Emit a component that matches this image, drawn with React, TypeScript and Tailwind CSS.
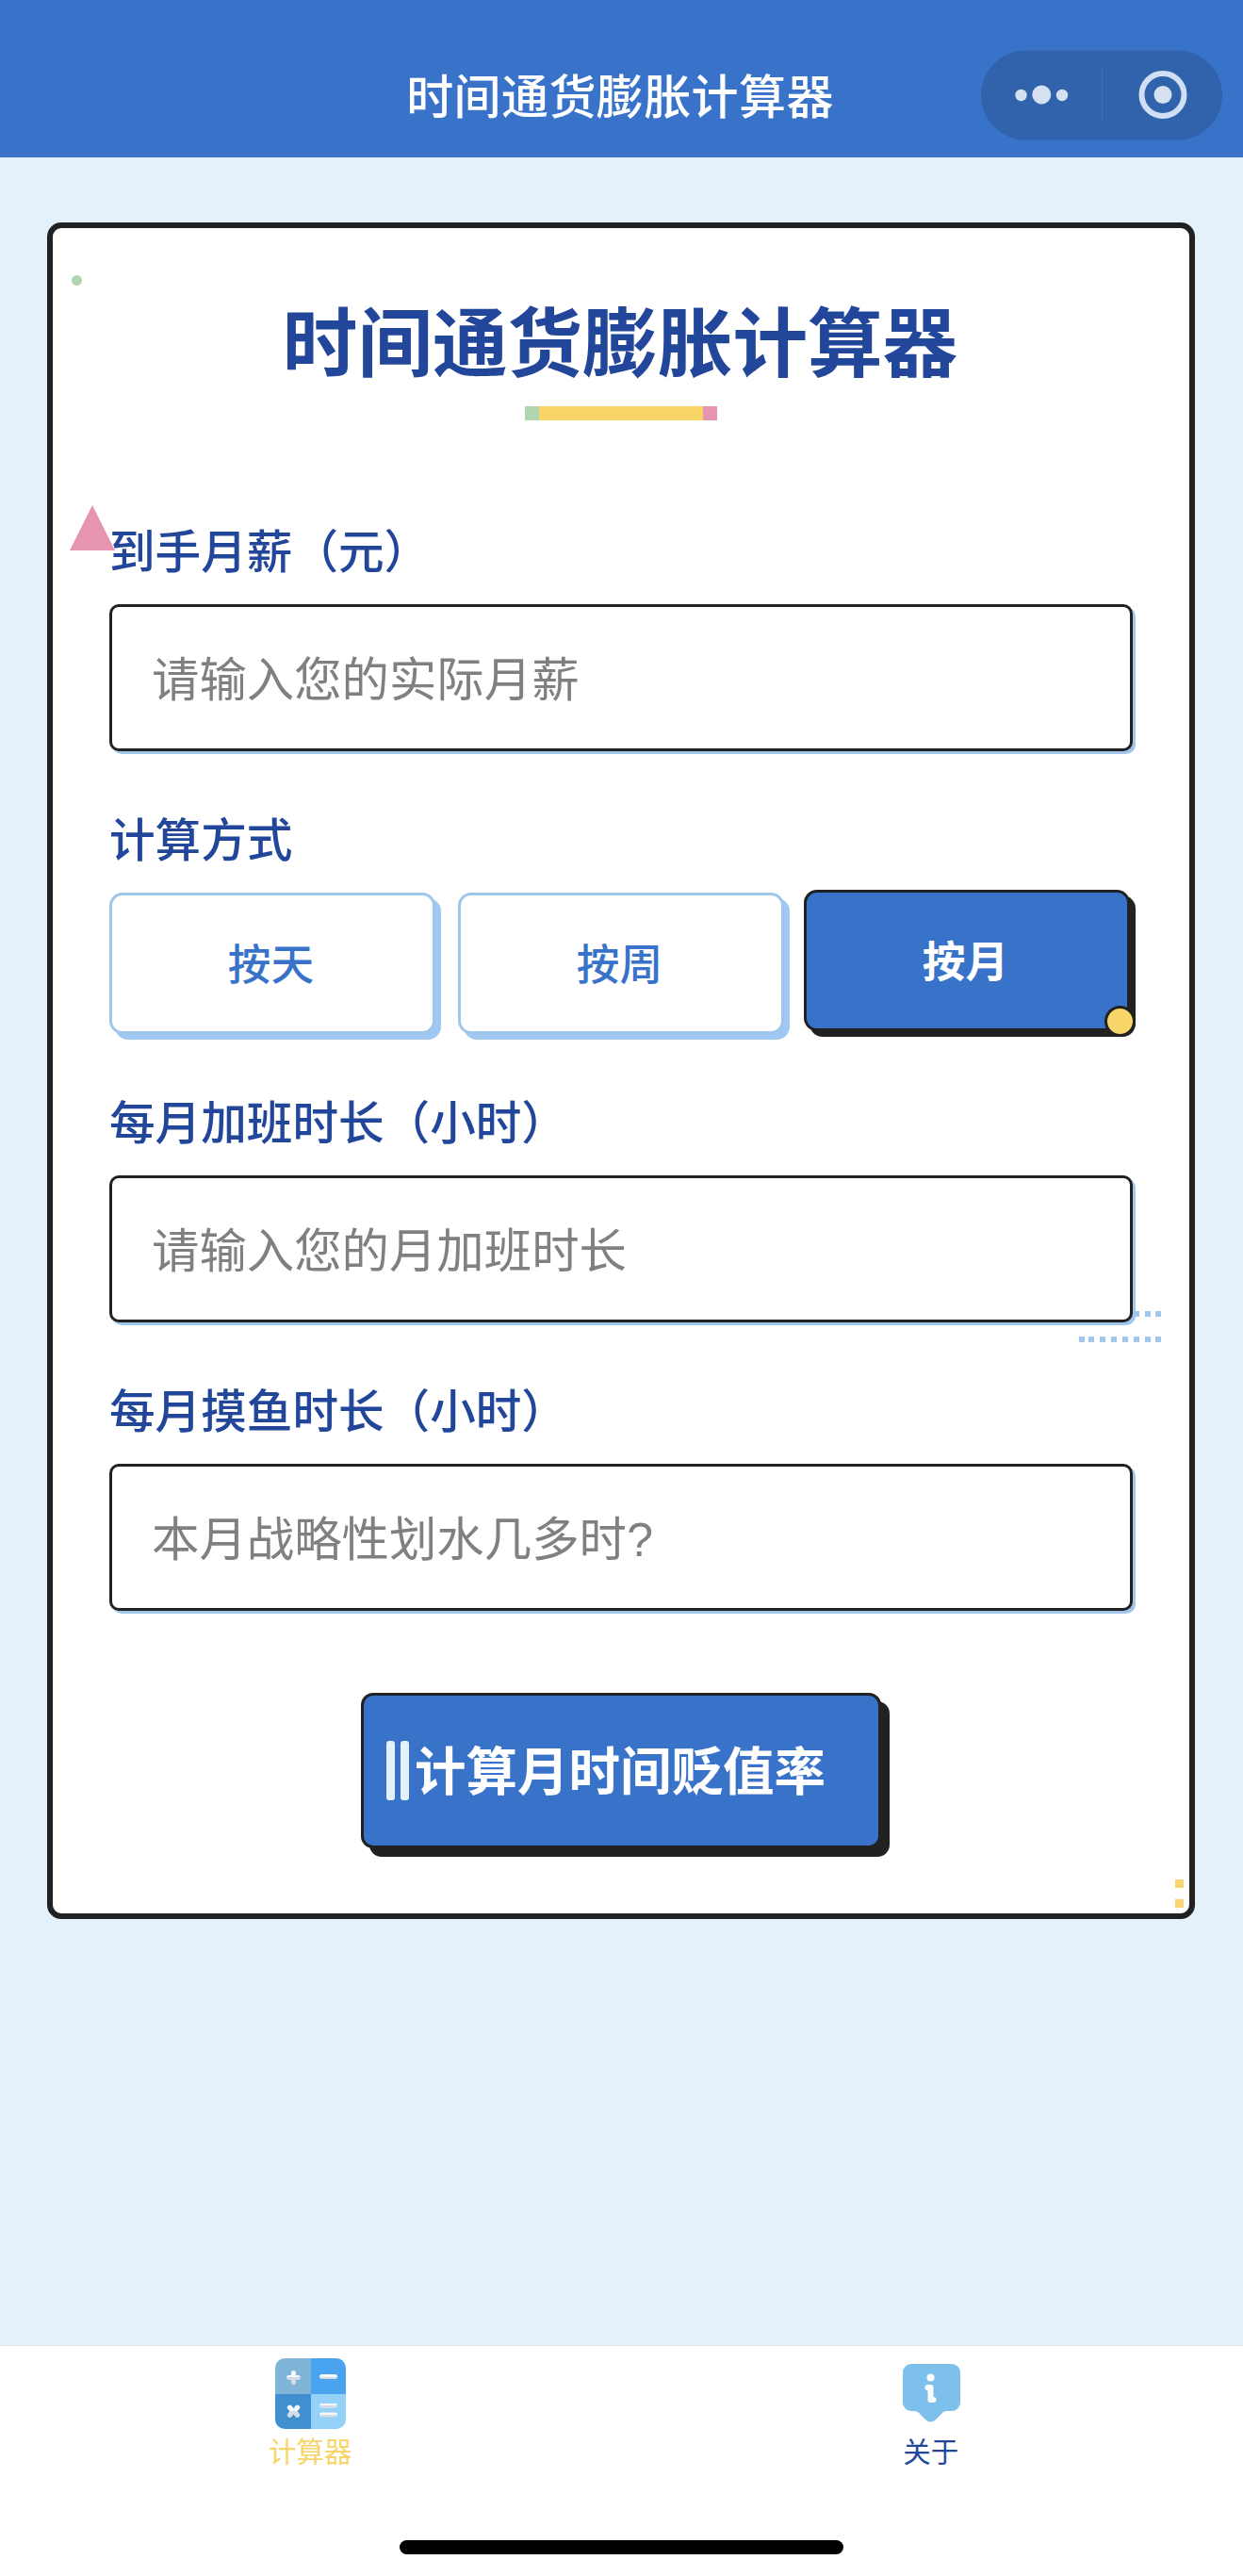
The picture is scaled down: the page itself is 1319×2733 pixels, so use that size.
import { useState } from "react";

type Mode = {
  key: string;
  label: string;
};

const modes: Mode[] = [
  { key: "day", label: "按天" },
  { key: "week", label: "按周" },
  { key: "month", label: "按月" },
];

// x offsets of the squares in the dotted decoration
const dotColumns = [0, 10, 22, 34, 46, 58, 70, 81];

function NavBar() {
  return (
    <header className="relative flex h-[167px] items-end justify-center bg-[#3873c9] pb-[33px]">
      <h1 className="pr-[3px] text-[50px] leading-[70px] font-medium tracking-[0.4px] text-white">
        时间通货膨胀计算器
      </h1>

      {/* Mini program capsule */}
      <svg className="absolute top-[53px] left-[1041px] h-[96px] w-[257px]" viewBox="0 0 257 96">
        <rect x="0" y="0.5" width="256" height="95" rx="47.5" fill="#3063ac" />
        <g fill="#d5e0f0">
          <circle cx="42.5" cy="48" r="6.2" />
          <circle cx="64.3" cy="47.5" r="10" />
          <circle cx="86" cy="48" r="6.2" />
          <circle cx="193" cy="47.5" r="9.5" />
        </g>
        <path d="M128.5 18v60" stroke="#3f6fb4" strokeWidth="1" />
        <circle cx="193" cy="47.5" r="22.5" fill="none" stroke="#d0dff3" strokeWidth="6" />
      </svg>
    </header>
  );
}

function Field({ label, placeholder }: { label: string; placeholder: string }) {
  return (
    <div>
      <label className="flex h-[150px] items-end pb-[24px] text-[48.6px] leading-[70px] font-medium text-[#21469a]">
        {label}
      </label>
      <input
        className="relative block h-[156px] w-full rounded-[10px] border-[3px] border-[#212121] bg-white px-[42px] pt-[5px] font-['Liberation_Sans','Noto_Sans_CJK_SC',sans-serif] text-[50.4px] shadow-[3px_3px_0_#a1c6ec] outline-none placeholder:text-[#808080]"
        placeholder={placeholder}
      />
    </div>
  );
}

function ModePicker({ value, onChange }: { value: string; onChange: (key: string) => void }) {
  return (
    <div>
      <p className="flex h-[150px] items-end pb-[24px] text-[48.6px] leading-[70px] font-medium text-[#21469a]">
        计算方式
      </p>
      <div className="grid grid-cols-3 gap-6">
        {modes.map((mode) => {
          const active = mode.key === value;
          return (
            <button
              key={mode.key}
              onClick={() => onChange(mode.key)}
              className={`relative h-[150px] rounded-[14px] border-[3px] pr-[3px] pb-[3px] text-[45.7px] ${
                active
                  ? "-translate-x-[3px] -translate-y-[3px] border-[#212121] bg-[#3873c9] font-bold text-white shadow-[6px_6px_0_#212121]"
                  : "border-[#a1c6ec] bg-white font-medium text-[#3873c9] shadow-[6px_6px_0_#9fc8f2]"
              }`}
            >
              {mode.label}
              {active && (
                <span className="absolute -right-[9px] -bottom-[9px] h-[33px] w-[33px] rounded-full border-[3px] border-[#212121] bg-[#f8d568]" />
              )}
            </button>
          );
        })}
      </div>
    </div>
  );
}

function CalculatorIcon() {
  return (
    <svg className="h-[75px] w-[75px]" viewBox="0 0 75 75">
      <defs>
        <clipPath id="calc">
          <rect width="75" height="75" rx="10" />
        </clipPath>
        <linearGradient id="key" x1="0" y1="0" x2="0" y2="1">
          <stop offset="0.5" stopColor="#f4f8fb" />
          <stop offset="0.5" stopColor="#d3dce6" />
        </linearGradient>
      </defs>
      <g clipPath="url(#calc)">
        <path d="M0 0h38v38H0z" fill="#81b5d8" />
        <path d="M38 0h37v38H38z" fill="#4aa3ef" />
        <path d="M0 38h38v37H0z" fill="#408fcf" />
        <path d="M38 38h37v37H38z" fill="#94d1f8" />
      </g>
      <g fill="url(#key)">
        <path d="M19.500 13a2.500 2.500 0 0 1 2.500 2.500v2.500h2.500a2.500 2.500 0 0 1 0 5H22v2.500a2.500 2.500 0 0 1-5 0V23h-2.500a2.500 2.500 0 0 1 0-5H17v-2.500a2.500 2.500 0 0 1 2.500-2.500z" />
        <rect x="47" y="17" width="19" height="5" rx="2.500" />
        <path d="M17.500 50.500l2 2.500 2-2.500a2.600 2.600 0 0 1 4 3.500L23.500 56l2 2.500a2.600 2.600 0 0 1-4 3.500l-2-2.500-2 2.500a2.600 2.600 0 0 1-4-3.500l2-2.500-2-2a2.600 2.600 0 0 1 4-3.500z" />
        <rect x="47" y="48" width="19" height="5" rx="2.500" />
        <rect x="47" y="57.500" width="19" height="5" rx="2.500" />
      </g>
    </svg>
  );
}

function InfoIcon() {
  return (
    <svg className="h-[75px] w-[75px]" viewBox="0 0 75 75">
      <path
        d="M15 6h45a9 9 0 0 1 9 9v32a9 9 0 0 1-9 9h-5q-4 0-6 3l-6 6q-5.500 5-11 0l-6-6q-2-3-6-3h-3a9 9 0 0 1-9-9V15a9 9 0 0 1 9-9z"
        fill="#7ec0ec"
      />
      <circle cx="37.500" cy="20.500" r="4" fill="#fff" />
      <path d="M34.500 31h3v13h3" fill="none" stroke="#fff" strokeWidth="6" strokeLinecap="round" strokeLinejoin="round" />
    </svg>
  );
}

function TabBar() {
  return (
    <footer className="flex h-[245px] flex-col border-t border-[#dbe5ed] bg-white">
      <nav className="grid grid-cols-2 pt-[13px] pr-[2px]">
        <a className="flex flex-col items-center text-[29.5px] leading-[42px] text-[#f8d568]">
          <CalculatorIcon />
          <span className="mt-[1px]">计算器</span>
        </a>
        <a className="flex flex-col items-center text-[29.5px] leading-[42px] text-[#21469a]">
          <InfoIcon />
          <span className="mt-[1px]">关于</span>
        </a>
      </nav>
      <div className="mx-auto mt-auto mb-[23px] h-[15px] w-[471px] rounded-full bg-black" />
    </footer>
  );
}

export default function App() {
  const [mode, setMode] = useState("month");

  return (
    <div className="flex h-[2733px] w-[1319px] flex-col bg-[#e4f1fb] font-['Noto_Sans_CJK_SC',sans-serif]">
      <NavBar />

      <main className="flex-1 pt-[69px] pl-[50px]">
        <section className="relative flex h-[1800px] w-[1218px] flex-col rounded-[15px] border-[6px] border-[#212121] bg-white px-[60px]">
          {/* Decorations */}
          <span className="absolute top-[50px] left-[20px] h-[11px] w-[11px] rounded-full bg-[#b0d6b0]" />
          <svg className="absolute top-[294px] left-[18px] h-[48px] w-[48px]" viewBox="0 0 48 48">
            <path d="M24 0l24 48H0z" fill="#e794b1" />
          </svg>
          <svg className="absolute top-[1149px] left-[1089px] h-[33px] w-[87px]" viewBox="0 0 87 33" fill="#a1c6ec">
            {dotColumns.map((x) => (
              <g key={x}>
                <rect x={x} y="0" width="6" height="6" />
                <rect x={x} y="27" width="6" height="6" />
              </g>
            ))}
          </svg>
          <div className="absolute right-[6px] bottom-[6px] flex flex-col gap-3">
            <span className="h-[9px] w-[9px] bg-[#f7d570]" />
            <span className="h-[9px] w-[9px] bg-[#f7d570]" />
          </div>

          <div className="relative flex h-[249px] flex-col items-center pt-[62px]">
            <h2 className="pr-[2px] text-[79.6px] leading-[110px] font-bold text-[#21469a]">时间通货膨胀计算器</h2>
            <div className="mt-[17px] flex h-[15px] w-[204px]">
              <span className="w-[15px] bg-[#b0d6b0]" />
              <span className="flex-1 bg-[#f8d568]" />
              <span className="w-[15px] bg-[#e794b1]" />
            </div>
          </div>

          <div className="relative">
            <Field label="到手月薪（元）" placeholder="请输入您的实际月薪" />
            <ModePicker value={mode} onChange={setMode} />
            <Field label="每月加班时长（小时）" placeholder="请输入您的月加班时长" />
            <Field label="每月摸鱼时长（小时）" placeholder="本月战略性划水几多时?" />
          </div>

          <button className="relative mt-[87px] flex h-[165px] w-[552px] items-center self-center rounded-[13px] border-[3px] border-[#212121] bg-[#3873c9] pl-[24px] text-[54.5px] font-bold whitespace-nowrap text-white shadow-[9px_9px_0_#212121]">
            <span className="mr-[6px] h-[63px] w-[9px] rounded-[3px] bg-[#e3f1fb]" />
            <span className="mr-[6px] h-[63px] w-[9px] rounded-[3px] bg-[#e3f1fb]" />
            <span className="pb-[5px]">计算月时间贬值率</span>
          </button>
        </section>
      </main>

      <TabBar />
    </div>
  );
}
